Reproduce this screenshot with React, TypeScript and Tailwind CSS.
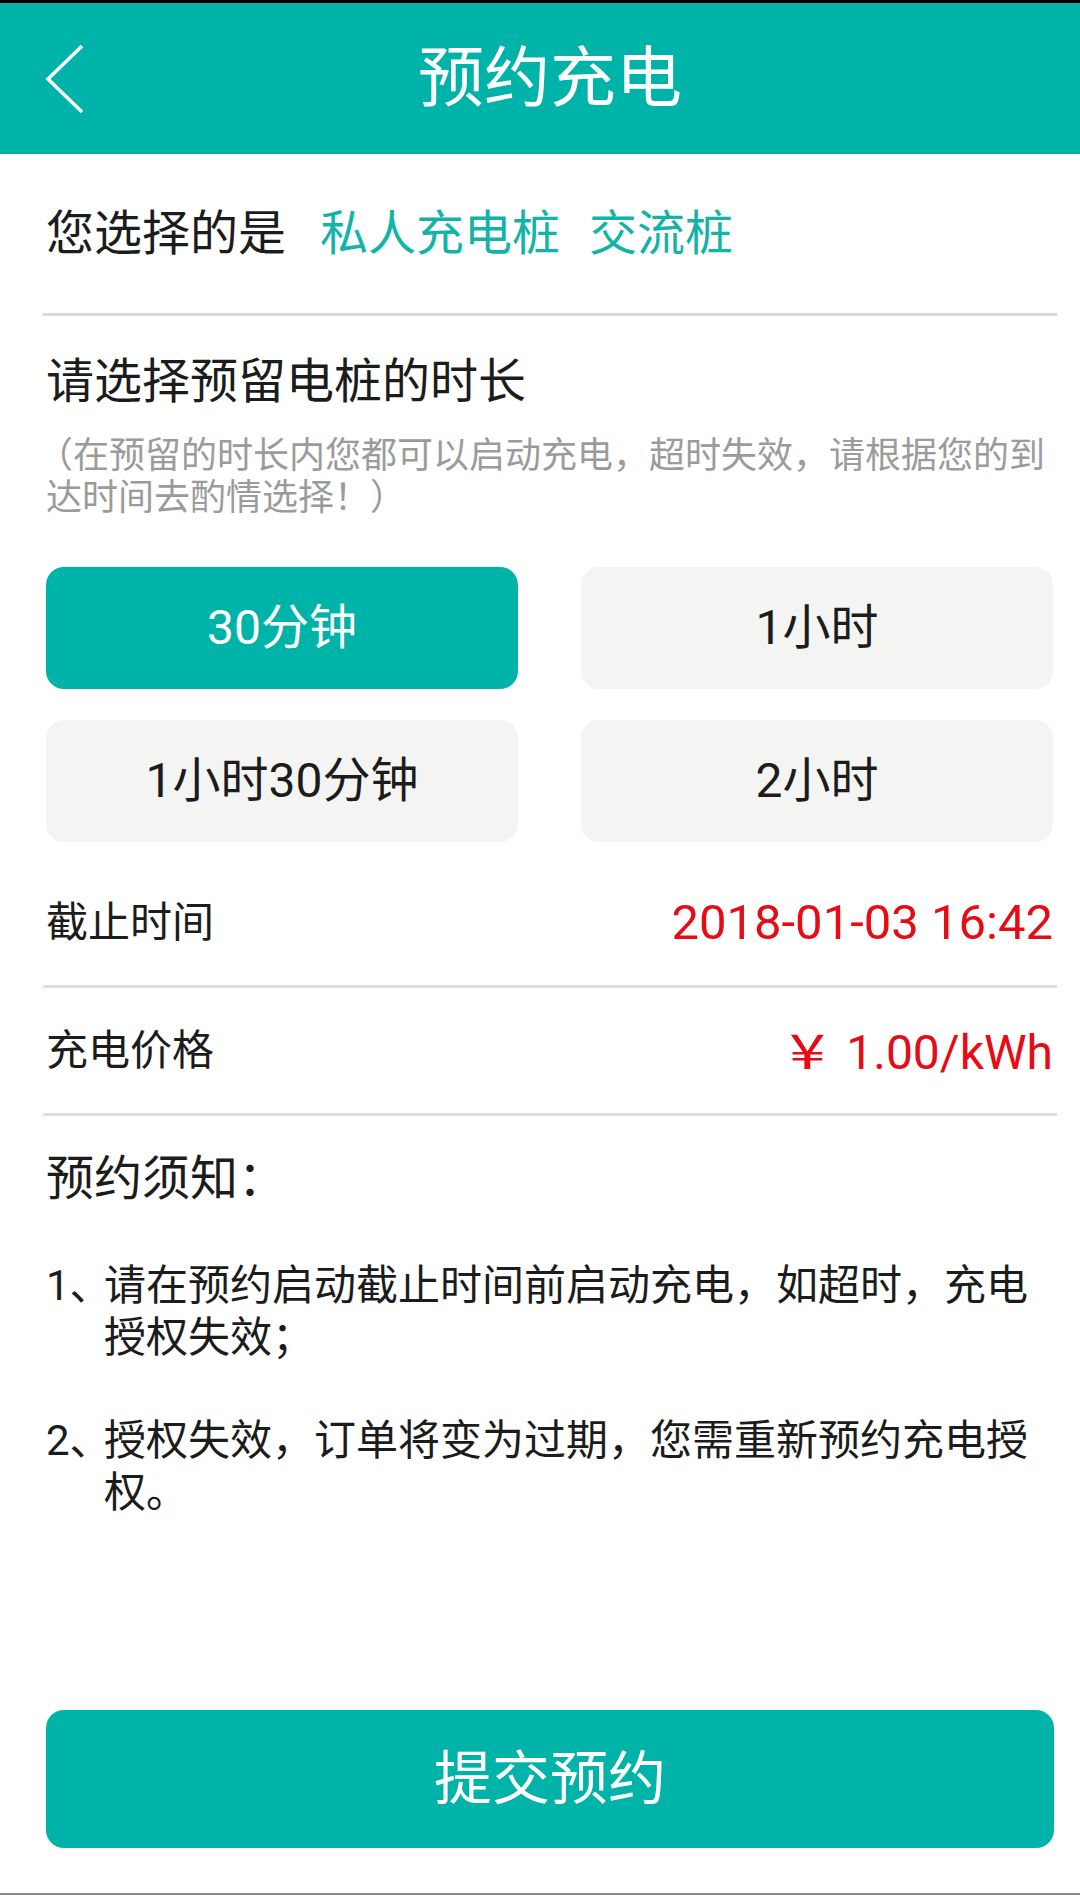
export default function App() {
  const durations = ["30分钟", "1小时", "1小时30分钟", "2小时"];
  const notes = [
    { n: "1", t: "请在预约启动截止时间前启动充电，如超时，充电授权失效；" },
    { n: "2", t: "授权失效，订单将变为过期，您需重新预约充电授权。" },
  ];
  return (
    <div className="w-[1080px] h-[1895px] flex flex-col bg-white font-[Roboto,'Noto_Sans_CJK_SC',sans-serif] text-[#1c1c1c]">
      <div className="h-[3px] bg-black shrink-0" />
      <header className="h-[151px] shrink-0 bg-[#00b3a9] flex items-center">
        <div className="w-[130px] pl-[45px] flex items-center">
          <svg width="40" height="70" viewBox="0 0 40 70" fill="none">
            <path d="M37 2 L3 35 L37 68" stroke="white" strokeWidth="3.5" />
          </svg>
        </div>
        <h1 className="flex-1 text-center text-white text-[66px] leading-none">预约充电</h1>
        <div className="w-[110px]" />
      </header>

      <main className="ml-[43px] mr-[23px] flex flex-col flex-1">
        <div className="h-[159px] shrink-0 flex items-center pl-[3px] text-[48px] leading-none whitespace-nowrap">
          <span>您选择的是</span>
          <span className="ml-[34px] text-[#14b3a8]">私人充电桩</span>
          <span className="ml-[29px] text-[#14b3a8]">交流桩</span>
        </div>
        <div className="h-[3px] bg-[#d9d9d9]" />

        <section className="pl-[3px] pr-[4px]">
          <div className="mt-[36px] text-[48px] leading-[60px]">请选择预留电桩的时长</div>
          <p className="mt-[23px] indent-[-9px] text-[36px] leading-[42px] text-[#9b9b9b]">
            （在预留的时长内您都可以启动充电，超时失效，请根据您的到达时间去酌情选择！）
          </p>
          <div className="mt-[48px] grid grid-cols-2 gap-x-[63px] gap-y-[31px]">
            {durations.map((d, i) => (
              <div
                key={d}
                className={
                  i === 0
                    ? "h-[122px] rounded-[18px] bg-[#00b3a9] text-white flex items-center justify-center text-[48px] leading-none"
                    : "h-[122px] rounded-[18px] bg-[#f4f5f3] text-[#1c1c1c] flex items-center justify-center text-[48px] leading-none"
                }
              >
                {d}
              </div>
            ))}
          </div>
        </section>

        <div className="mt-[18px] h-[125px] flex items-center justify-between pl-[3px] pr-[4px]">
          <span className="text-[42px] leading-none">截止时间</span>
          <span className="text-[49px] leading-none text-[#e50c16]">2018-01-03 16:42</span>
        </div>
        <div className="h-[3px] bg-[#dedede]" />
        <div className="h-[125px] flex items-center justify-between pl-[3px] pr-[4px]">
          <span className="text-[42px] leading-none">充电价格</span>
          <span className="text-[48px] leading-none text-[#e50c16] whitespace-nowrap">
            <span className="inline-block mr-[26px] scale-x-[1.36] font-['Noto_Sans_CJK_SC',sans-serif]">¥</span>1.00/kWh
          </span>
        </div>
        <div className="h-[3px] bg-[#dedede]" />

        <div className="mt-[33px] pl-[3px] text-[48px] leading-[60px]">预约须知：</div>
        {notes.map((item) => (
          <div key={item.n} className="mt-[51px] pl-[3px] pr-[4px] flex text-[42px] leading-[52px]">
            <span className="w-[58px] shrink-0 whitespace-nowrap">
              {item.n}
              <span className="[font-feature-settings:'halt']">、</span>
            </span>
            <span className="flex-1">{item.t}</span>
          </div>
        ))}

        <button className="mt-auto mb-[45px] mx-[3px] h-[138px] rounded-[18px] bg-[#00b3a9] text-white text-[58px] leading-none flex items-center justify-center">
          提交预约
        </button>
      </main>
      <div className="h-[2px] bg-[#8a8a8a] shrink-0" />
    </div>
  );
}
